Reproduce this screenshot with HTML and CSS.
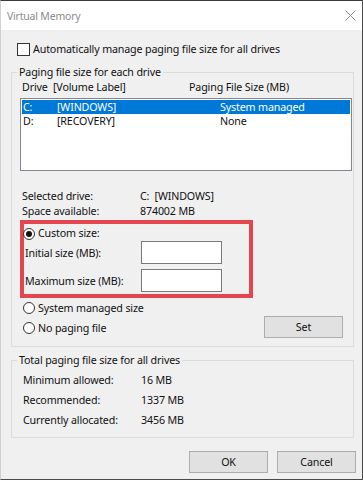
FILE: index.html
```html
<!DOCTYPE html>
<html>
<head>
<meta charset="utf-8">
<link rel="stylesheet" href="styles.css">
</head>
<body>
<div class="window">
  <div class="titlebar">
    <span class="title">Virtual Memory</span>
    <svg class="close" width="11" height="11" viewBox="0 0 11 11"><path d="M0.5 0.5 L10.5 10.5 M10.5 0.5 L0.5 10.5" stroke="#8a8a8a" stroke-width="1" fill="none"/></svg>
  </div>
  <div class="content">
    <div class="check-row"><span class="checkbox"></span><span>Automatically manage paging file size for all drives</span></div>

    <fieldset class="group g1">
      <legend>Paging file size for each drive</legend>
      <div class="list-head"><span>Drive</span><span>[Volume Label]</span><span>Paging File Size (MB)</span></div>
      <div class="listbox">
        <div class="row sel"><span>C:</span><span>[WINDOWS]</span><span>System managed</span></div>
        <div class="row"><span>D:</span><span>[RECOVERY]</span><span>None</span></div>
      </div>
      <div class="info">
        <span>Selected drive:</span><span>C:&nbsp; [WINDOWS]</span>
        <span>Space available:</span><span>874002 MB</span>
      </div>
      <div class="redbox">
        <div class="radio-row first"><span class="radio on"></span><span>Custom size:</span></div>
        <div class="size-row"><span>Initial size (MB):</span><span class="input"></span></div>
        <div class="size-row"><span>Maximum size (MB):</span><span class="input"></span></div>
      </div>
      <div class="bottom-row">
        <div class="radios">
          <div class="radio-row"><span class="radio"></span><span>System managed size</span></div>
          <div class="radio-row"><span class="radio"></span><span>No paging file</span></div>
        </div>
        <div class="btn set">Set</div>
      </div>
    </fieldset>

    <fieldset class="group g2">
      <legend>Total paging file size for all drives</legend>
      <div class="totals">
        <span>Minimum allowed:</span><span>16 MB</span>
        <span>Recommended:</span><span>1337 MB</span>
        <span>Currently allocated:</span><span>3456 MB</span>
      </div>
    </fieldset>

    <div class="buttons">
      <div class="btn">OK</div>
      <div class="btn">Cancel</div>
    </div>
  </div>
</div>
</body>
</html>
```
FILE: styles.css
```css
* { box-sizing: border-box; }
html, body { margin: 0; padding: 0; background: #ffffff; }
body {
  font-family: "Noto Sans", "DejaVu Sans", sans-serif;
  font-size: 10.7px;
  letter-spacing: -0.15px;
  color: #111;
}
.window {
  width: 363px;
  height: 480px;
  border-top: 1px solid #3a3a3a;
  border-right: 1px solid #4a4a4a;
  border-bottom: 1px solid #4a4a4a;
  border-left: 1px solid #d0d0d0;
  display: flex;
  flex-direction: column;
  overflow: hidden;
}
.titlebar {
  height: 29px;
  flex: none;
  background: #ffffff;
  display: flex;
  align-items: center;
  justify-content: space-between;
  padding: 0 6px 0 6px;
}
.title { color: #8c8c8c; font-size: 10.5px; letter-spacing: -0.2px; }
.close { display: block; margin-right: 0; }
.content {
  flex: 1;
  background: #f0f0f0;
  padding: 12px 8px 0 10px;
}
.check-row {
  display: flex;
  align-items: center;
  height: 15px;
  line-height: 15px;
  padding-left: 6px;
}
.checkbox {
  width: 13px;
  height: 13px;
  border: 1px solid #333;
  background: #fff;
  margin-right: 3px;
  flex: none;
}
.group {
  border: 1px solid #dcdcdc;
  margin: 0;
  padding: 0 1px 7px 8px;
  min-width: 0;
}
.group legend {
  padding: 0 2px;
  margin-left: -3px;
  line-height: 15px;
}
.g1 { margin-top: 8px; padding-bottom: 8px; }
.list-head {
  display: grid;
  grid-template-columns: 31px 136px 1fr;
  line-height: 15px;
  padding-left: 2px;
}
.listbox {
  margin-top: 3px;
  height: 73px;
  background: #fff;
  border: 1px solid #828790;
  padding: 1px;
  margin-right: 0;
}
.row {
  display: grid;
  grid-template-columns: 34px 163px 1fr;
  line-height: 14px;
  height: 14px;
  padding-left: 1px;
}
.row.sel { background: #0078d7; color: #fff; }
.info {
  margin-top: 18px;
  display: grid;
  grid-template-columns: 118px 1fr;
  line-height: 15px;
  padding-left: 2px;
}
.redbox {
  margin-top: 1px;
  width: 233px;
  border: 4px solid #e3464e;
  padding: 2px 0 2px 0;
}
.radio-row {
  display: flex;
  align-items: center;
  line-height: 20px;
  height: 20px;
  padding-left: 3px;
}
.radio-row.first {
  height: 15px;
  line-height: 15px;
  padding-left: 0;
  margin-left: -1px;
}
.radio {
  width: 12px;
  height: 12px;
  border: 1px solid #333;
  border-radius: 50%;
  background: #fff;
  margin-right: 3px;
  flex: none;
  display: flex;
  align-items: center;
  justify-content: center;
}
.radio.on::after {
  content: "";
  width: 6px;
  height: 6px;
  border-radius: 50%;
  background: #111;
}
.size-row {
  display: grid;
  grid-template-columns: 116px 81px;
  align-items: center;
  height: 23px;
  padding-left: 1px;
}
.size-row + .size-row { margin-top: 5px; }
.input {
  display: block;
  height: 23px;
  background: #fff;
  border: 1px solid #7a7a7a;
}
.bottom-row {
  display: flex;
  justify-content: space-between;
  align-items: flex-end;
}
.btn {
  width: 79px;
  height: 22px;
  line-height: 20px;
  text-align: center;
  background: #e1e1e1;
  border: 1px solid #adadad;
}
.set { margin-right: 9px; }
.g2 { margin-top: 6px; padding-bottom: 7px; }
.totals {
  padding-top: 2px;
  display: grid;
  grid-template-columns: 118px 1fr;
  line-height: 20px;
  padding-left: 3px;
}
.buttons {
  margin-top: 13px;
  margin-right: -2px;
  display: flex;
  justify-content: flex-end;
  gap: 9px;
}
```
